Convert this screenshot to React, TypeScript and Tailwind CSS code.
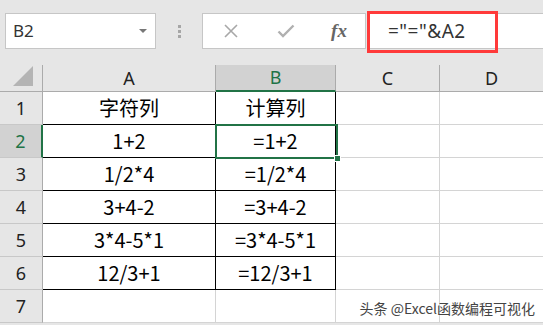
import React from 'react';

const rows: [string, string][] = [
  ['字符列', '计算列'],
  ['1+2', '=1+2'],
  ['1/2*4', '=1/2*4'],
  ['3+4-2', '=3+4-2'],
  ['3*4-5*1', '=3*4-5*1'],
  ['12/3+1', '=12/3+1'],
  ['', ''],
];

const cellFont = { fontFamily: '"Noto Sans CJK SC", "Noto Sans", sans-serif' };

export default function App() {
  return (
    <div className="w-[543px] h-[325px] overflow-hidden bg-[#e6e6e6] relative" style={{ fontFamily: '"Noto Sans", "Noto Sans CJK SC", sans-serif' }}>
      {/* Formula bar */}
      <div className="h-[65px] flex items-start pt-[13px] pl-[5px]">
        <div className="w-[151px] h-[36px] bg-white border border-[#c6c6c6] flex items-center justify-between pl-[7px] pr-[8px]">
          <span className="text-[17px] text-[#333]">B2</span>
          <svg width="8" height="5" viewBox="0 0 8 5"><path d="M0 0h8L4 4z" fill="#777" /></svg>
        </div>
        <div className="w-[46px] h-[36px] flex flex-col items-center justify-center gap-[2px]">
          <span className="w-[3px] h-[3px] bg-[#a6a6a6]" />
          <span className="w-[3px] h-[3px] bg-[#a6a6a6]" />
          <span className="w-[3px] h-[3px] bg-[#a6a6a6]" />
        </div>
        <div className="w-[164px] h-[36px] bg-white border border-[#c6c6c6] flex items-center">
          <div className="w-[56px] flex justify-center">
            <svg width="16" height="16" viewBox="0 0 16 16"><path d="M2 2l12 12M14 2L2 14" stroke="#a8a8a8" strokeWidth="1.6" /></svg>
          </div>
          <div className="w-[54px] flex justify-center">
            <svg width="18" height="16" viewBox="0 0 18 16"><path d="M1.5 8.5l4.5 4.5L16.5 2.5" stroke="#b0b0b0" strokeWidth="2.4" fill="none" /></svg>
          </div>
          <div className="w-[52px] flex justify-center">
            <span className="text-[19px] italic text-[#666] font-bold" style={{ fontFamily: '"Liberation Serif", serif' }}>fx</span>
          </div>
        </div>
        <div className="flex-1 h-[36px] ml-[2px] bg-white border-y border-[#c6c6c6] flex items-center pl-[20px]">
          <span className="text-[19px] text-[#333] tracking-[0.5px]" style={{ fontFamily: '"Noto Sans", sans-serif' }}>="="&amp;A2</span>
        </div>
        {/* highlight annotation */}
        <div className="absolute left-[367px] top-[11px] w-[131px] h-[42px] border-[3px] border-[#ff3a3a]" />
      </div>

      {/* Grid */}
      <div className="relative grid grid-cols-[43px_173px_120px_104px_1fr] grid-rows-[27px_repeat(7,33px)]">
        {/* header row */}
        <div className="border-r border-b border-[#ababab] flex items-end justify-end pr-[9px] pb-[5px]">
          <svg width="20" height="20" viewBox="0 0 20 20"><path d="M20 0V20H0z" fill="#b4b4b4" /></svg>
        </div>
        <div className="border-r border-b border-[#ababab] flex items-center justify-center text-[18px] text-[#222]">A</div>
        <div className="bg-[#d2d2d2] border-r border-[#ababab] border-b-2 border-b-[#217346] flex items-center justify-center text-[18px] text-[#217346]">B</div>
        <div className="border-r border-b border-[#ababab] flex items-center justify-center text-[18px] text-[#222]">C</div>
        <div className="border-b border-[#ababab] flex items-center justify-center text-[18px] text-[#222]">D</div>

        {rows.map((r, i) => {
          const sel = i === 1;
          const inTable = i < 6;
          return (
            <React.Fragment key={i}>
              <div
                className={
                  sel
                    ? 'bg-[#d2d2d2] border-r-2 border-r-[#217346] border-b border-b-[#c8c8c8] flex items-center justify-center text-[18px] text-[#217346]'
                    : 'bg-[#e6e6e6] border-r border-r-[#ababab] border-b border-b-[#c8c8c8] flex items-center justify-center text-[18px] text-[#222]'
                }
              >
                {i + 1}
              </div>
              <div
                className={
                  inTable
                    ? 'bg-white border-r border-b border-black flex items-center justify-center text-[20px] text-black'
                    : 'bg-white border-r border-b border-[#d4d4d4]'
                }
                style={cellFont}
              >
                {r[0]}
              </div>
              <div
                className={
                  inTable
                    ? 'bg-white border-r border-b border-black flex items-center justify-center text-[20px] text-black'
                    : 'bg-white border-r border-b border-[#d4d4d4]'
                }
                style={cellFont}
              >
                {r[1]}
              </div>
              <div className="bg-white border-r border-b border-[#d4d4d4]" />
              <div className="bg-white border-b border-[#d4d4d4]" />
            </React.Fragment>
          );
        })}

        {/* selection on B2 */}
        <div className="absolute left-[215px] top-[59px] w-[123px] h-[35px] border-2 border-[#217346] pointer-events-none" />
        <div className="absolute left-[334px] top-[90px] w-[7px] h-[7px] bg-[#217346] border border-white" />

        {/* watermark */}
        <div className="absolute right-[8px] bottom-[4px] text-[14px] text-[#444]" style={{ fontFamily: '"Noto Sans CJK SC", sans-serif', textShadow: '0 0 2px #fff' }}>
          头条 @Excel函数编程可视化
        </div>
      </div>
    </div>
  );
}
